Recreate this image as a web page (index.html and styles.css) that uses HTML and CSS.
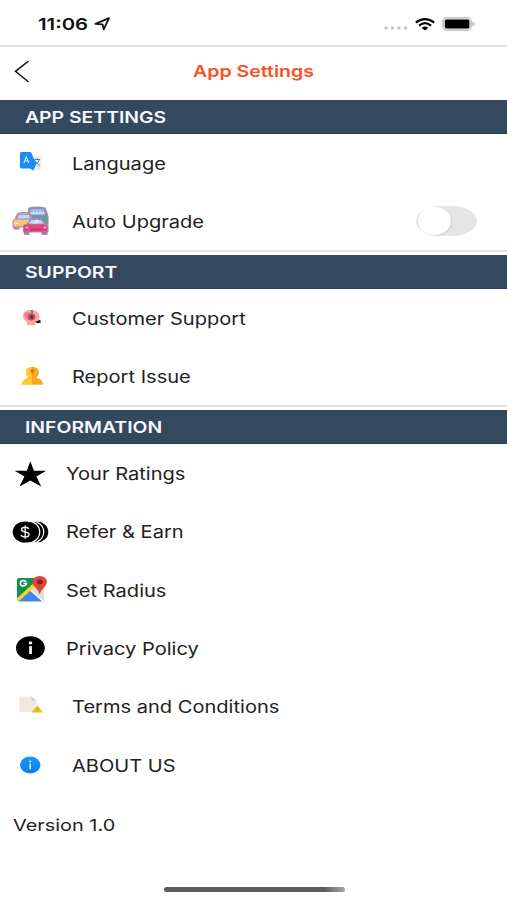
FILE: index.html
```html
<!DOCTYPE html>
<html lang="en">
<head>
  <meta charset="UTF-8" />
  <meta name="viewport" content="width=device-width, initial-scale=1.0">
  <title>App Settings</title>
  <link rel="stylesheet" href="styles.css">
</head>
<body>
  <div class="status-bar">
    <div class="status-left">
      <span class="time wide">11:06</span>
      <svg class="location" width="17" height="14" viewBox="0 0 17 14">
        <path d="M1.5 6.8 L15 1.2 L9.7 12.4 L8.6 7.4 Z" fill="none" stroke="#111" stroke-width="1.8" stroke-linejoin="round"/>
      </svg>
    </div>
    <div class="status-right">
      <svg width="24" height="4" viewBox="0 0 24 4" class="signal" fill="#c4c4c4">
        <circle cx="2" cy="2" r="1.8"/><circle cx="8.5" cy="2" r="1.8"/><circle cx="15" cy="2" r="1.8"/><circle cx="21.5" cy="2" r="1.8"/>
      </svg>
      <svg width="20" height="13" viewBox="0 0 20 13" class="wifi">
        <g fill="none" stroke="#000" stroke-width="2.1">
          <path d="M0.8 4.6 Q10 -2.4 19.2 4.6"/>
          <path d="M4 7.6 Q10 2.8 16 7.6"/>
        </g>
        <path d="M6.8 9.9 Q10 7.2 13.2 9.9 L10 12.6 Z"/>
      </svg>
      <svg width="33" height="14" viewBox="0 0 33 14">
        <rect x="0.8" y="0.8" width="28.4" height="12.4" rx="4" fill="#e4e4e4" stroke="#c6c6c6" stroke-width="1.5"/>
        <rect x="2.8" y="2.6" width="24.6" height="8.8" rx="1.6" fill="#000"/>
        <path d="M30.4 4.5 Q32.8 5.4 32.8 7 Q32.8 8.6 30.4 9.5 Z" fill="#bdbdbd"/>
      </svg>
    </div>
  </div>

  <header>
    <button class="back" aria-label="Back">
      <svg width="16" height="23" viewBox="0 0 16 23">
        <path d="M14.6 1 L1.5 11.3 L14.6 22" fill="none" stroke="#111" stroke-width="1.5"/>
      </svg>
    </button>
    <h1>App Settings</h1>
  </header>

  <main>
    <section>
      <h2><span class="wide">APP SETTINGS</span></h2>
      <div class="row">
        <svg class="icon" width="40" height="34" viewBox="0 0 40 34">
          <rect x="22" y="10" width="9.5" height="14" rx="1" fill="#eeeeee"/>
          <path d="M24.5 13.5 H30 M27.5 12 V13.5 M29.3 13.5 Q28.6 17.5 25 19 M26 15.5 Q27.5 18.5 30 19.5" stroke="#6b7f88" stroke-width="1" fill="none"/>
          <path d="M11.5 6 H20 Q21.3 6 21.8 7.5 L22.8 10.5 L26.3 16.5 L25.6 20 L23 24.7 L20.3 22.4 H11.5 Q10 22.4 10 21 V7.5 Q10 6 11.5 6 Z" fill="#1a8cf0"/>
          <path d="M13.8 17 L16.3 11 L18.8 17 M14.6 15 H18" fill="none" stroke="#cfeaff" stroke-width="1.1"/>
        </svg>
        <span class="label wide">Language</span>
      </div>
      <div class="row">
        <svg class="icon" width="40" height="34" viewBox="0 0 40 34">
          <g stroke="#a486bd" stroke-width="1.1" stroke-linejoin="round">
            <path d="M20 21 V24 H18 V19 H37 V23 H33 V20" fill="#857a9c"/>
            <path d="M19 4 Q27 2.2 35 4 L37.3 10 L38 12.5 V20 H17.5 V12 Z" fill="#5c9f9b"/>
            <path d="M20.4 5 H33.8 L35.8 11 H18.8 Z" fill="#b9dcfb"/>
            <path d="M21 7 H34" stroke-dasharray="2 1.3" stroke="#637ec0"/>
            <path d="M4 21 H9 V25 H4 Z" fill="#a98ebb"/>
            <path d="M3.2 17 L5 15 L8 9.2 Q14 8 20 9.2 L23 15 V23 H3 Z" fill="#f6c778"/>
            <path d="M6.3 15 L9 10.3 H19 L21.4 15 Z" fill="#b8daff"/>
            <path d="M14.5 27 H19 V30.3 H14.5 Z M32 27 H37 V30.3 H32 Z" fill="#8d6d99"/>
            <path d="M14 21 L18 19.8 L20.3 15.2 Q26 14 32 15.2 L35.3 20 L38 21.5 V28 H13.5 V22 Z" fill="#e3477b"/>
            <path d="M17.8 20 L21 15.6 H31.5 L34.8 20 Z" fill="#c0ddff"/>
          </g>
          <path d="M24 19.8 L26 16.3 H28 L26.3 19.8 M5 19.5 H8" stroke="#fff" stroke-width="0.8" fill="none"/>
          <path d="M15.5 23.5 H18 M33.8 23.5 H36.3" stroke="#ffc1b8" stroke-width="1.4"/>
          <path d="M20 25.5 H32" stroke="#b9326a" stroke-width="1.3"/>
        </svg>
        <span class="label wide">Auto Upgrade</span>
        <button class="toggle" role="switch" aria-checked="false" aria-label="Auto Upgrade"></button>
      </div>
    </section>

    <section>
      <h2><span class="wide">SUPPORT</span></h2>
      <div class="row">
        <svg class="icon" width="40" height="34" viewBox="0 0 40 34">
          <path d="M13 15.5 Q12.5 10 19.5 9 Q28.5 8.5 29.5 15 L29.2 19.5 L26 20 L25 24 H17 L17 21 Q13.4 19.5 13 15.5 Z" fill="#fba89a"/>
          <path d="M14.5 12 Q18.5 10 22 13.5 L22.5 19 Q16.5 20 14.5 15 Z" fill="#f07c80"/>
          <ellipse cx="21.5" cy="16" rx="3.8" ry="3.5" fill="#c44b66"/>
          <circle cx="21.7" cy="15.8" r="1.9" fill="#573365"/>
          <path d="M22 9 V12.5" stroke="#6c7480" stroke-width="1.8"/>
          <path d="M25 20.8 L30.3 18.8 L30.8 21.8 L27.5 22.2 Z" fill="#17181c"/>
        </svg>
        <span class="label wide">Customer Support</span>
      </div>
      <div class="row">
        <svg class="icon" width="40" height="34" viewBox="0 0 40 34">
          <path d="M11.4 25.8 Q12.2 20.5 18 18.8 Q15.6 17 15.6 12.8 Q16 8 22 7.8 V25.8 Z" fill="#ffc831"/>
          <path d="M22 7.8 Q28.7 8 29 13.2 Q29 16.8 26.3 18.8 Q32.4 20 33.2 25.8 H22 Z" fill="#f4ac1c"/>
          <path d="M20.3 11.5 Q20.3 9.9 22.2 9.9 Q24.2 9.9 24 11.7 L22.2 15.5 Z" fill="#df6330"/>
        </svg>
        <span class="label wide">Report Issue</span>
      </div>
    </section>

    <section>
      <h2><span class="wide">INFORMATION</span></h2>
      <div class="row near">
        <svg class="icon" width="40" height="34" viewBox="0 0 40 34">
          <path d="M20.3 4.2 L24 13.8 H36.2 L26.4 19.5 L31.2 29.5 L20.3 23.4 L9.6 29.5 L14.4 19.5 L4.6 13.8 H16.8 Z"/>
        </svg>
        <span class="label wide">Your Ratings</span>
      </div>
      <div class="row near">
        <svg class="icon" width="40" height="34" viewBox="0 0 40 34">
          <ellipse cx="27" cy="17" rx="11.3" ry="10.4"/>
          <ellipse cx="22" cy="17" rx="11.7" ry="10.9" stroke="#fff" stroke-width="1.2"/>
          <ellipse cx="18" cy="17" rx="11.7" ry="10.9" stroke="#fff" stroke-width="1.2"/>
          <ellipse cx="14.7" cy="17" rx="12" ry="10.6"/>
          <path d="M19 13.8 Q18 12.2 15 12.2 Q11.6 12.2 11.6 14.6 Q11.6 16.5 15.2 17 Q19 17.4 19 19.8 Q18.8 22 15.2 22 Q11.8 22 11 20 M15.2 10.5 V23.7" fill="none" stroke="#eee" stroke-width="1.4"/>
        </svg>
        <span class="label wide">Refer &amp; Earn</span>
      </div>
      <div class="row near">
        <svg class="icon" width="40" height="34" viewBox="0 0 40 34">
          <clipPath id="map"><rect x="7" y="5" width="27" height="23.3" rx="2"/></clipPath>
          <g clip-path="url(#map)">
            <rect x="7" y="5" width="27" height="24" fill="#12934d"/>
            <path d="M21 16 L34 4 V29 H21 Z" fill="#dedede"/>
            <path d="M7 29 L21 17 L33 29 Z" fill="#4385ee"/>
            <path d="M6 28.5 L28 8.5" stroke="#fcd12d" stroke-width="3.6"/>
            <path d="M20.6 17.3 L34 29" stroke="#fff" stroke-width="1.5"/>
          </g>
          <path d="M16.3 8.8 Q15.2 7.5 13.3 7.5 Q10.3 7.7 10.3 10.2 Q10.3 12.8 13.3 12.9 Q16.3 12.8 16.5 10.5 H13.5" fill="none" stroke="#fff" stroke-width="1.5"/>
          <path d="M29.6 21.6 Q28.9 17.9 25.5 14.6 Q22.4 11.8 22.4 9 Q23 3.2 29.7 2.9 Q36.5 3.2 37 9 Q36.8 12 33.8 14.7 Q30.3 18.1 29.6 21.6 Z" fill="#e0443a"/>
          <ellipse cx="29.8" cy="9" rx="2.8" ry="2.4" fill="#80241f"/>
        </svg>
        <span class="label wide">Set Radius</span>
      </div>
      <div class="row near">
        <svg class="icon" width="40" height="34" viewBox="0 0 40 34">
          <ellipse cx="20.4" cy="17" rx="14.4" ry="11.8"/>
          <ellipse cx="20.5" cy="12" rx="1.8" ry="1.4" fill="#fff"/>
          <path d="M19.2 15.2 H21.9 V23 H19.2 Z" fill="#fff"/>
        </svg>
        <span class="label wide">Privacy Policy</span>
      </div>
      <div class="row">
        <svg class="icon" width="40" height="34" viewBox="0 0 40 34">
          <path d="M9.5 6.5 H21 L26.5 10.5 V22 H9.5 Z" fill="#eeeae0"/>
          <path d="M21 6.5 L26.5 10.5 H21.8 Z" fill="#d2cfc6"/>
          <path d="M27.3 15.8 L32.8 22.2 H21.8 Z" fill="#f4bf22" stroke="#f4bf22" stroke-width="0.6" stroke-linejoin="round"/>
          <path d="M27.3 17.8 V20 M27.3 20.6 V21.5" stroke="#c0962a" stroke-width="1"/>
        </svg>
        <span class="label wide">Terms and Conditions</span>
      </div>
      <div class="row">
        <svg class="icon" width="40" height="34" viewBox="0 0 40 34">
          <defs>
            <linearGradient id="blue" x1="0" y1="0" x2="0" y2="1">
              <stop offset="0" stop-color="#159bf5"/><stop offset="1" stop-color="#0a7cf0"/>
            </linearGradient>
          </defs>
          <ellipse cx="20.2" cy="17" rx="10.2" ry="8.5" fill="url(#blue)"/>
          <ellipse cx="20.2" cy="13.4" rx="1.1" ry="0.9" fill="#d5eeff"/>
          <path d="M20.2 15.5 V21.2" fill="none" stroke="#d5eeff" stroke-width="1.6"/>
        </svg>
        <span class="label wide">ABOUT US</span>
      </div>
    </section>
  </main>

  <p class="version"><span class="wide">Version 1.0</span></p>
  <div class="home-bar"></div>
</body>
</html>
```
FILE: styles.css
```css
:root {
  --accent: #fa5223;
  --section-bg: #34495e;
  --text-color: #222222;
  --line: #e4e4e4;
}

* {
  box-sizing: border-box;
}

body {
  margin: 0;
  height: 900px;
  display: flex;
  flex-direction: column;
  overflow: hidden;
  background-color: #fff;
  color: var(--text-color);
  font-family: Inter, "Liberation Sans", sans-serif;
  font-size: 17px;
}

button {
  border: none;
  padding: 0;
  background: none;
  cursor: pointer;
}

svg {
  display: block;
}

/* extended letterforms */
.wide {
  display: inline-block;
  white-space: nowrap;
  transform: scaleX(1.18);
  transform-origin: left center;
}

.status-bar {
  height: 47px;
  padding: 3px 32px 0 38px;
  border-bottom: 2px solid var(--line);
  display: flex;
  align-items: center;
  justify-content: space-between;
}

.status-left,
.status-right {
  display: flex;
  align-items: center;
}

.time {
  width: 55.5px;
  font-size: 16.5px;
  font-weight: 600;
  color: #111;
  transform: scaleX(1.23);
}

.signal {
  margin: 8px 7px 0 0;
}

.wifi {
  margin-right: 7px;
}

header {
  height: 53px;
  padding: 0 14px 5px;
  display: grid;
  grid-template-columns: 40px 1fr 40px;
  align-items: center;
}

h1 {
  margin: 0;
  text-align: center;
  font-size: 16px;
  font-weight: 600;
  color: var(--accent);
  transform: scaleX(1.22);
}

h2 {
  margin: 0;
  height: 34px;
  padding-left: 25px;
  line-height: 34px;
  font-size: 16px;
  font-weight: 600;
  color: #f4f9ff;
  background-color: var(--section-bg);
  border-bottom: 1px solid #2a3d54;
}

h2 .wide {
  transform: scaleX(1.212);
}

section + section {
  border-top: 2px solid var(--line);
  padding-top: 3px;
}

.row {
  height: 58.1px;
  padding: 0 30px 0 10px;
  display: flex;
  align-items: center;
}

section:last-child .row {
  height: 58.3px;
}

.icon {
  flex: none;
  margin-right: 22px;
}

.near .icon {
  margin-right: 16px;
}

.label {
  padding-top: 1px;
}

.toggle {
  width: 61px;
  height: 30px;
  margin-left: auto;
  border-radius: 24px / 15px;
  background-color: #e6e6e6;
}

.toggle::before {
  content: "";
  display: block;
  width: 33px;
  height: 28px;
  margin-left: 1.5px;
  border-radius: 50%;
  background-color: #fff;
  box-shadow: 1px 1px 2px rgba(0, 0, 0, 0.1);
}

.version {
  margin: 14.5px 0 0 13px;
  font-size: 16.5px;
  line-height: 32px;
}

.version .wide {
  transform: scaleX(1.205);
}

.home-bar {
  width: 181px;
  height: 5px;
  margin: auto 0 8px 164px;
  border-radius: 3px;
  background: linear-gradient(to right, #5c5c5c 88%, #a8a8a8);
}
```
